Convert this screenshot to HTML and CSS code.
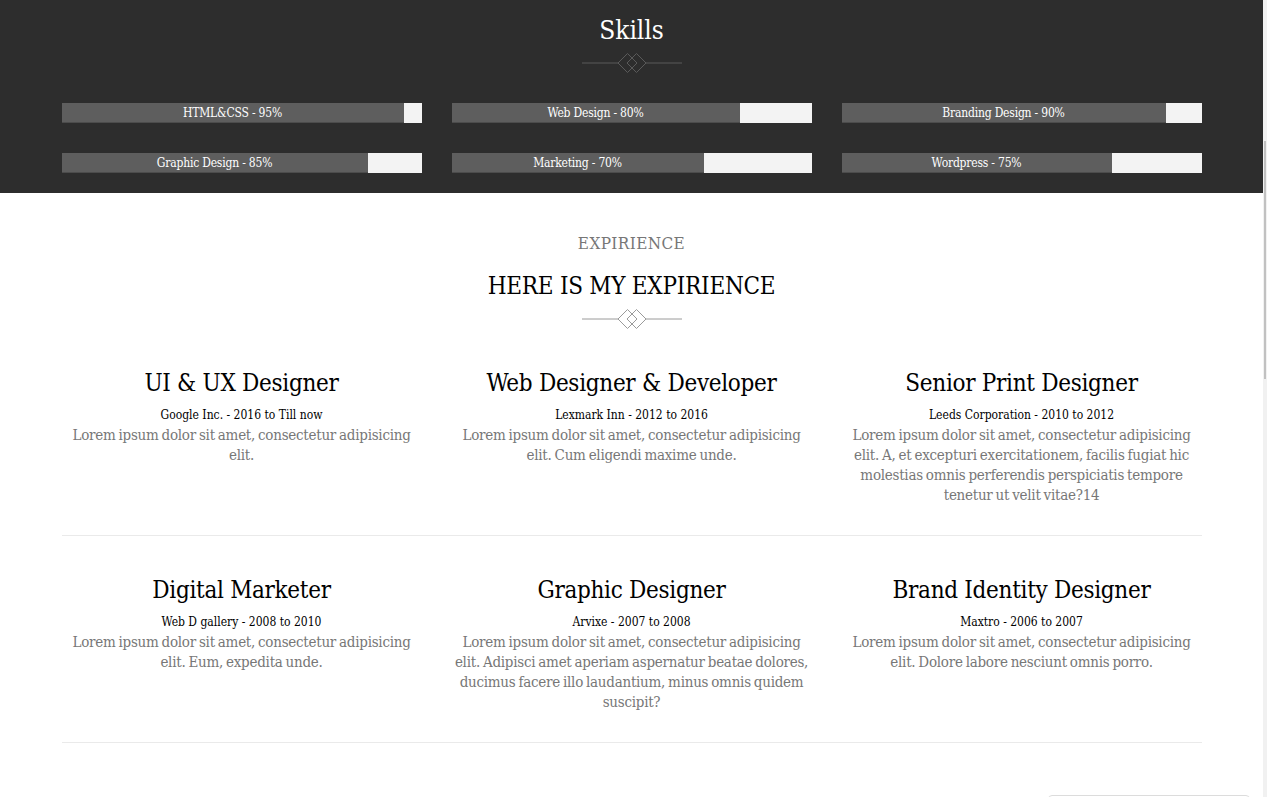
FILE: index.html
```html
<!DOCTYPE html>
<html>
<head>
<meta charset="utf-8">
<link rel="stylesheet" href="styles.css">
</head>
<body>
<div class="page">
  <section class="skills">
    <h2 class="skills-title">Skills</h2>
    <svg class="divider divider-dark" viewBox="0 0 100 22" width="100" height="22">
      <line x1="0" y1="11" x2="36" y2="11"/>
      <polygon points="36,11 45.5,1.5 55,11 45.5,20.5"/>
      <polygon points="45,11 54.5,1.5 64,11 54.5,20.5"/>
      <line x1="64" y1="11" x2="100" y2="11"/>
    </svg>
    <div class="container skill-grid">
      <div class="bar"><div class="fill" style="width:95%">HTML&amp;CSS - 95%</div></div>
      <div class="bar"><div class="fill" style="width:80%">Web Design - 80%</div></div>
      <div class="bar"><div class="fill" style="width:90%">Branding Design - 90%</div></div>
      <div class="bar"><div class="fill" style="width:85%">Graphic Design - 85%</div></div>
      <div class="bar"><div class="fill" style="width:70%">Marketing - 70%</div></div>
      <div class="bar"><div class="fill" style="width:75%">Wordpress - 75%</div></div>
    </div>
  </section>

  <section class="exp">
    <p class="exp-kicker">EXPIRIENCE</p>
    <h2 class="exp-title">HERE IS MY EXPIRIENCE</h2>
    <svg class="divider divider-light" viewBox="0 0 100 22" width="100" height="22">
      <line x1="0" y1="11" x2="36" y2="11"/>
      <polygon points="36,11 45.5,1.5 55,11 45.5,20.5"/>
      <polygon points="45,11 54.5,1.5 64,11 54.5,20.5"/>
      <line x1="64" y1="11" x2="100" y2="11"/>
    </svg>
    <div class="container">
      <div class="exp-row">
        <div class="job">
          <h3>UI &amp; UX Designer</h3>
          <p class="company">Google Inc. - 2016 to Till now</p>
          <p class="desc">Lorem ipsum dolor sit amet, consectetur adipisicing elit.</p>
        </div>
        <div class="job">
          <h3>Web Designer &amp; Developer</h3>
          <p class="company">Lexmark Inn - 2012 to 2016</p>
          <p class="desc">Lorem ipsum dolor sit amet, consectetur adipisicing elit. Cum eligendi maxime unde.</p>
        </div>
        <div class="job">
          <h3>Senior Print Designer</h3>
          <p class="company">Leeds Corporation - 2010 to 2012</p>
          <p class="desc">Lorem ipsum dolor sit amet, consectetur adipisicing elit. A, et excepturi exercitationem, facilis fugiat hic molestias omnis perferendis perspiciatis tempore tenetur ut velit vitae?14</p>
        </div>
      </div>
      <div class="exp-row">
        <div class="job">
          <h3>Digital Marketer</h3>
          <p class="company">Web D gallery - 2008 to 2010</p>
          <p class="desc">Lorem ipsum dolor sit amet, consectetur adipisicing elit. Eum, expedita unde.</p>
        </div>
        <div class="job">
          <h3>Graphic Designer</h3>
          <p class="company">Arvixe - 2007 to 2008</p>
          <p class="desc">Lorem ipsum dolor sit amet, consectetur adipisicing elit. Adipisci amet aperiam aspernatur beatae dolores, ducimus facere illo laudantium, minus omnis quidem suscipit?</p>
        </div>
        <div class="job">
          <h3>Brand Identity Designer</h3>
          <p class="company">Maxtro - 2006 to 2007</p>
          <p class="desc">Lorem ipsum dolor sit amet, consectetur adipisicing elit. Dolore labore nesciunt omnis porro.</p>
        </div>
      </div>
    </div>
  </section>
</div>
<div class="scroll-track"><div class="scroll-thumb"></div></div>
<div class="corner-box"></div>
</body>
</html>
```

FILE: styles.css
```css
html, body {
  margin: 0;
  padding: 0;
  overflow: hidden;
  background: #fff;
}
body {
  font-family: "DejaVu Serif Condensed", "DejaVu Serif", serif;
  color: #000;
}
.page {
  margin-right: 4px;
}
.container {
  width: 1140px;
  margin: 0 auto;
}
.divider {
  display: block;
  margin: 0 auto;
  fill: none;
  stroke-width: 1;
}
.divider-dark { stroke: #5a5a5a; }
.divider-light { stroke: #9a9a9a; }

.skills {
  background: #2d2d2d;
  padding: 16px 0 20px;
}
.skills-title {
  margin: 0;
  text-align: center;
  color: #fff;
  font-weight: normal;
  font-size: 26px;
  line-height: 29px;
}
.skills .divider {
  margin-top: 7px;
}
.skill-grid {
  margin-top: 29px;
  display: grid;
  grid-template-columns: repeat(3, 360px);
  column-gap: 30px;
  row-gap: 30px;
}
.bar {
  height: 20px;
  background: #f3f3f3;
}
.fill {
  height: 19px;
  background: #5e5e5e;
  border-bottom: 1px solid #4c4c4c;
  color: #fff;
  font-size: 12px;
  line-height: 21px;
  letter-spacing: -0.2px;
  text-align: center;
  white-space: nowrap;
}

.exp {
  padding-top: 40px;
  text-align: center;
}
.exp-kicker {
  margin: 0;
  color: #777;
  font-size: 17px;
  letter-spacing: 0.4px;
  line-height: 20px;
}
.exp-title {
  margin: 18px 0 0;
  font-weight: normal;
  font-size: 24px;
  letter-spacing: -0.24px;
  line-height: 30px;
}
.exp .divider {
  margin-top: 7px;
}
.exp-row {
  display: grid;
  grid-template-columns: repeat(3, 360px);
  column-gap: 30px;
  padding: 38px 0 30px;
  border-bottom: 1px solid #eaeaea;
}
.exp-row + .exp-row {
  padding-top: 39px;
}
.job h3 {
  margin: 0;
  font-weight: normal;
  font-size: 24px;
  letter-spacing: -0.3px;
  line-height: 30px;
}
.company {
  margin: 7px 0 0;
  font-size: 12px;
  line-height: 20px;
}
.desc {
  margin: 0;
  color: #777;
  font-size: 15px;
  letter-spacing: -0.26px;
  word-spacing: -1px;
  line-height: 20px;
}

.scroll-track {
  position: fixed;
  top: 0;
  right: 0;
  width: 4px;
  height: 100%;
  background: #f1f1f1;
}
.scroll-thumb {
  position: absolute;
  top: 141px;
  left: 1px;
  width: 2px;
  height: 238px;
  background: #c1c1c1;
}
.corner-box {
  position: fixed;
  left: 1048px;
  top: 795px;
  width: 200px;
  height: 20px;
  border: 1px solid #dcdcdc;
  border-radius: 4px;
  background: #fff;
}
```
